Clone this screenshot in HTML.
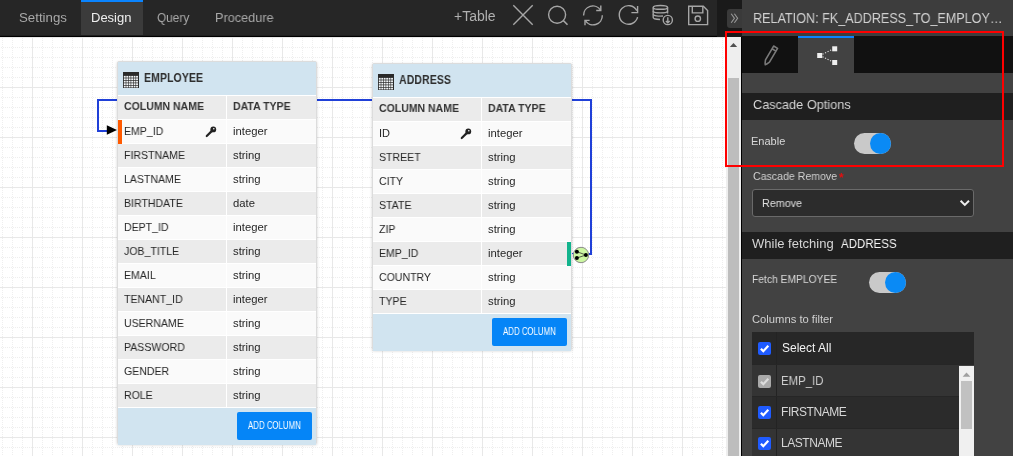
<!DOCTYPE html><html><head><meta charset="utf-8"><title>ERD</title><style>
*{margin:0;padding:0;box-sizing:border-box}
html,body{width:1013px;height:456px;overflow:hidden;background:#fff;font-family:"Liberation Sans",sans-serif}
.a{position:absolute}
.t{line-height:1;white-space:nowrap;will-change:transform}
</style></head><body>
<svg class="a" style="left:0;top:37px" width="726" height="419" shape-rendering="crispEdges">
<defs><pattern id="g" x="2" y="0" width="50" height="50" patternUnits="userSpaceOnUse">
<g stroke="#eeeeee" stroke-width="1" stroke-dasharray="1 1" stroke-dashoffset="1">
<path d="M0.5 0V50M10.5 0V50M20.5 0V50M40.5 0V50"/>
<path d="M0 0.5H50M0 10.5H50M0 20.5H50M0 30.5H50M0 40.5H50"/>
</g>
<path d="M30.5 0V50M0 0.5H50" stroke="#e8e8e8" stroke-width="1" fill="none"/>
</pattern></defs>
<rect width="726" height="419" fill="url(#g)"/>
</svg>
<svg class="a" style="left:0;top:0" width="726" height="456" shape-rendering="crispEdges">
<path d="M317 100H591V254H589" stroke="#2040d8" stroke-width="2" fill="none"/>
<path d="M117 99.5H97.5V130.5H108" stroke="#2040d8" stroke-width="2" fill="none"/>
</svg>
<div class="a" style="left:117px;top:61px;width:200px;height:383px;background:#fff;border:1px solid #dcdcdc;border-radius:2px;box-shadow:0 1px 3px rgba(0,0,0,.18)"></div>
<div class="a" style="left:118px;top:62px;width:198px;height:33px;background:#d1e4f0"></div>
<svg class="a" style="left:123px;top:72px" width="16" height="16"><rect width="16" height="16" fill="#2a2a2a"/><g fill="#f2f6f8"><rect x="0.85" y="3.90" width="1.85" height="1.75"/><rect x="3.30" y="3.90" width="1.85" height="1.75"/><rect x="5.75" y="3.90" width="1.85" height="1.75"/><rect x="8.20" y="3.90" width="1.85" height="1.75"/><rect x="10.65" y="3.90" width="1.85" height="1.75"/><rect x="13.10" y="3.90" width="1.85" height="1.75"/><rect x="0.85" y="6.35" width="1.85" height="1.75"/><rect x="3.30" y="6.35" width="1.85" height="1.75"/><rect x="5.75" y="6.35" width="1.85" height="1.75"/><rect x="8.20" y="6.35" width="1.85" height="1.75"/><rect x="10.65" y="6.35" width="1.85" height="1.75"/><rect x="13.10" y="6.35" width="1.85" height="1.75"/><rect x="0.85" y="8.80" width="1.85" height="1.75"/><rect x="3.30" y="8.80" width="1.85" height="1.75"/><rect x="5.75" y="8.80" width="1.85" height="1.75"/><rect x="8.20" y="8.80" width="1.85" height="1.75"/><rect x="10.65" y="8.80" width="1.85" height="1.75"/><rect x="13.10" y="8.80" width="1.85" height="1.75"/><rect x="0.85" y="11.25" width="1.85" height="1.75"/><rect x="3.30" y="11.25" width="1.85" height="1.75"/><rect x="5.75" y="11.25" width="1.85" height="1.75"/><rect x="8.20" y="11.25" width="1.85" height="1.75"/><rect x="10.65" y="11.25" width="1.85" height="1.75"/><rect x="13.10" y="11.25" width="1.85" height="1.75"/><rect x="0.85" y="13.70" width="1.85" height="1.75"/><rect x="3.30" y="13.70" width="1.85" height="1.75"/><rect x="5.75" y="13.70" width="1.85" height="1.75"/><rect x="8.20" y="13.70" width="1.85" height="1.75"/><rect x="10.65" y="13.70" width="1.85" height="1.75"/><rect x="13.10" y="13.70" width="1.85" height="1.75"/></g></svg>
<div class="a t" style="left:143.5px;top:71.64px;font-size:12px;color:#2e2e2e;font-weight:bold;letter-spacing:0px;transform:scaleX(0.885);transform-origin:0 0;">EMPLOYEE</div>
<div class="a" style="left:118px;top:96px;width:108px;height:23px;background:#ebebeb"></div>
<div class="a" style="left:227px;top:96px;width:89px;height:23px;background:#ebebeb"></div>
<div class="a t" style="left:124.4px;top:101.49px;font-size:11px;color:#333;font-weight:bold;letter-spacing:0px;transform:scaleX(0.955);transform-origin:0 0;">COLUMN NAME</div>
<div class="a t" style="left:233.2px;top:101.49px;font-size:11px;color:#333;font-weight:bold;letter-spacing:0px;transform:scaleX(0.955);transform-origin:0 0;">DATA TYPE</div>
<div class="a" style="left:118px;top:120px;width:108px;height:23px;background:#fafafa"></div>
<div class="a" style="left:227px;top:120px;width:89px;height:23px;background:#fafafa"></div>
<div class="a t" style="left:123.8px;top:125.99px;font-size:11px;color:#262626;font-weight:normal;letter-spacing:0px;transform:scaleX(0.96);transform-origin:0 0;">EMP_ID</div>
<div class="a t" style="left:233.3px;top:125.99px;font-size:11px;color:#262626;font-weight:normal;letter-spacing:0px;transform:scaleX(1.025);transform-origin:0 0;">integer</div>
<svg class="a" style="left:205.3px;top:125.8px" width="12" height="12"><g fill="#222"><circle cx="8.3" cy="3.4" r="2.9"/><path d="M6.2 3.9L8.0 5.6L2.5 10.8Q1.5 11.5 0.9 10.8Q0.4 10.1 1.0 9.3Z"/></g><circle cx="8.8" cy="2.8" r="0.8" fill="#fafafa"/></svg>
<div class="a" style="left:118px;top:144px;width:108px;height:23px;background:#ebebeb"></div>
<div class="a" style="left:227px;top:144px;width:89px;height:23px;background:#ebebeb"></div>
<div class="a t" style="left:123.8px;top:149.99px;font-size:11px;color:#262626;font-weight:normal;letter-spacing:0px;transform:scaleX(0.96);transform-origin:0 0;">FIRSTNAME</div>
<div class="a t" style="left:233.3px;top:149.99px;font-size:11px;color:#262626;font-weight:normal;letter-spacing:0px;transform:scaleX(1.025);transform-origin:0 0;">string</div>
<div class="a" style="left:118px;top:168px;width:108px;height:23px;background:#fafafa"></div>
<div class="a" style="left:227px;top:168px;width:89px;height:23px;background:#fafafa"></div>
<div class="a t" style="left:123.8px;top:173.99px;font-size:11px;color:#262626;font-weight:normal;letter-spacing:0px;transform:scaleX(0.96);transform-origin:0 0;">LASTNAME</div>
<div class="a t" style="left:233.3px;top:173.99px;font-size:11px;color:#262626;font-weight:normal;letter-spacing:0px;transform:scaleX(1.025);transform-origin:0 0;">string</div>
<div class="a" style="left:118px;top:192px;width:108px;height:23px;background:#ebebeb"></div>
<div class="a" style="left:227px;top:192px;width:89px;height:23px;background:#ebebeb"></div>
<div class="a t" style="left:123.8px;top:197.99px;font-size:11px;color:#262626;font-weight:normal;letter-spacing:0px;transform:scaleX(0.96);transform-origin:0 0;">BIRTHDATE</div>
<div class="a t" style="left:233.3px;top:197.99px;font-size:11px;color:#262626;font-weight:normal;letter-spacing:0px;transform:scaleX(1.025);transform-origin:0 0;">date</div>
<div class="a" style="left:118px;top:216px;width:108px;height:23px;background:#fafafa"></div>
<div class="a" style="left:227px;top:216px;width:89px;height:23px;background:#fafafa"></div>
<div class="a t" style="left:123.8px;top:221.99px;font-size:11px;color:#262626;font-weight:normal;letter-spacing:0px;transform:scaleX(0.96);transform-origin:0 0;">DEPT_ID</div>
<div class="a t" style="left:233.3px;top:221.99px;font-size:11px;color:#262626;font-weight:normal;letter-spacing:0px;transform:scaleX(1.025);transform-origin:0 0;">integer</div>
<div class="a" style="left:118px;top:240px;width:108px;height:23px;background:#ebebeb"></div>
<div class="a" style="left:227px;top:240px;width:89px;height:23px;background:#ebebeb"></div>
<div class="a t" style="left:123.8px;top:245.99px;font-size:11px;color:#262626;font-weight:normal;letter-spacing:0px;transform:scaleX(0.96);transform-origin:0 0;">JOB_TITLE</div>
<div class="a t" style="left:233.3px;top:245.99px;font-size:11px;color:#262626;font-weight:normal;letter-spacing:0px;transform:scaleX(1.025);transform-origin:0 0;">string</div>
<div class="a" style="left:118px;top:264px;width:108px;height:23px;background:#fafafa"></div>
<div class="a" style="left:227px;top:264px;width:89px;height:23px;background:#fafafa"></div>
<div class="a t" style="left:123.8px;top:269.99px;font-size:11px;color:#262626;font-weight:normal;letter-spacing:0px;transform:scaleX(0.96);transform-origin:0 0;">EMAIL</div>
<div class="a t" style="left:233.3px;top:269.99px;font-size:11px;color:#262626;font-weight:normal;letter-spacing:0px;transform:scaleX(1.025);transform-origin:0 0;">string</div>
<div class="a" style="left:118px;top:288px;width:108px;height:23px;background:#ebebeb"></div>
<div class="a" style="left:227px;top:288px;width:89px;height:23px;background:#ebebeb"></div>
<div class="a t" style="left:123.8px;top:293.99px;font-size:11px;color:#262626;font-weight:normal;letter-spacing:0px;transform:scaleX(0.96);transform-origin:0 0;">TENANT_ID</div>
<div class="a t" style="left:233.3px;top:293.99px;font-size:11px;color:#262626;font-weight:normal;letter-spacing:0px;transform:scaleX(1.025);transform-origin:0 0;">integer</div>
<div class="a" style="left:118px;top:312px;width:108px;height:23px;background:#fafafa"></div>
<div class="a" style="left:227px;top:312px;width:89px;height:23px;background:#fafafa"></div>
<div class="a t" style="left:123.8px;top:317.99px;font-size:11px;color:#262626;font-weight:normal;letter-spacing:0px;transform:scaleX(0.96);transform-origin:0 0;">USERNAME</div>
<div class="a t" style="left:233.3px;top:317.99px;font-size:11px;color:#262626;font-weight:normal;letter-spacing:0px;transform:scaleX(1.025);transform-origin:0 0;">string</div>
<div class="a" style="left:118px;top:336px;width:108px;height:23px;background:#ebebeb"></div>
<div class="a" style="left:227px;top:336px;width:89px;height:23px;background:#ebebeb"></div>
<div class="a t" style="left:123.8px;top:341.99px;font-size:11px;color:#262626;font-weight:normal;letter-spacing:0px;transform:scaleX(0.96);transform-origin:0 0;">PASSWORD</div>
<div class="a t" style="left:233.3px;top:341.99px;font-size:11px;color:#262626;font-weight:normal;letter-spacing:0px;transform:scaleX(1.025);transform-origin:0 0;">string</div>
<div class="a" style="left:118px;top:360px;width:108px;height:23px;background:#fafafa"></div>
<div class="a" style="left:227px;top:360px;width:89px;height:23px;background:#fafafa"></div>
<div class="a t" style="left:123.8px;top:365.99px;font-size:11px;color:#262626;font-weight:normal;letter-spacing:0px;transform:scaleX(0.96);transform-origin:0 0;">GENDER</div>
<div class="a t" style="left:233.3px;top:365.99px;font-size:11px;color:#262626;font-weight:normal;letter-spacing:0px;transform:scaleX(1.025);transform-origin:0 0;">string</div>
<div class="a" style="left:118px;top:384px;width:108px;height:23px;background:#ebebeb"></div>
<div class="a" style="left:227px;top:384px;width:89px;height:23px;background:#ebebeb"></div>
<div class="a t" style="left:123.8px;top:389.99px;font-size:11px;color:#262626;font-weight:normal;letter-spacing:0px;transform:scaleX(0.96);transform-origin:0 0;">ROLE</div>
<div class="a t" style="left:233.3px;top:389.99px;font-size:11px;color:#262626;font-weight:normal;letter-spacing:0px;transform:scaleX(1.025);transform-origin:0 0;">string</div>
<div class="a" style="left:118px;top:408px;width:198px;height:37px;background:#d1e4f0"></div>
<div class="a" style="left:237px;top:412px;width:75px;height:28px;background:#0585f7;border-radius:2px"></div>
<div class="a t" style="left:248.1px;top:420.94px;font-size:10px;color:#ffffff;font-weight:normal;letter-spacing:0px;transform:scaleX(0.785);transform-origin:0 0;">ADD COLUMN</div>
<div class="a" style="left:372px;top:63px;width:200px;height:287px;background:#fff;border:1px solid #dcdcdc;border-radius:2px;box-shadow:0 1px 3px rgba(0,0,0,.18)"></div>
<div class="a" style="left:373px;top:64px;width:198px;height:33px;background:#d1e4f0"></div>
<svg class="a" style="left:378px;top:74px" width="16" height="16"><rect width="16" height="16" fill="#2a2a2a"/><g fill="#f2f6f8"><rect x="0.85" y="3.90" width="1.85" height="1.75"/><rect x="3.30" y="3.90" width="1.85" height="1.75"/><rect x="5.75" y="3.90" width="1.85" height="1.75"/><rect x="8.20" y="3.90" width="1.85" height="1.75"/><rect x="10.65" y="3.90" width="1.85" height="1.75"/><rect x="13.10" y="3.90" width="1.85" height="1.75"/><rect x="0.85" y="6.35" width="1.85" height="1.75"/><rect x="3.30" y="6.35" width="1.85" height="1.75"/><rect x="5.75" y="6.35" width="1.85" height="1.75"/><rect x="8.20" y="6.35" width="1.85" height="1.75"/><rect x="10.65" y="6.35" width="1.85" height="1.75"/><rect x="13.10" y="6.35" width="1.85" height="1.75"/><rect x="0.85" y="8.80" width="1.85" height="1.75"/><rect x="3.30" y="8.80" width="1.85" height="1.75"/><rect x="5.75" y="8.80" width="1.85" height="1.75"/><rect x="8.20" y="8.80" width="1.85" height="1.75"/><rect x="10.65" y="8.80" width="1.85" height="1.75"/><rect x="13.10" y="8.80" width="1.85" height="1.75"/><rect x="0.85" y="11.25" width="1.85" height="1.75"/><rect x="3.30" y="11.25" width="1.85" height="1.75"/><rect x="5.75" y="11.25" width="1.85" height="1.75"/><rect x="8.20" y="11.25" width="1.85" height="1.75"/><rect x="10.65" y="11.25" width="1.85" height="1.75"/><rect x="13.10" y="11.25" width="1.85" height="1.75"/><rect x="0.85" y="13.70" width="1.85" height="1.75"/><rect x="3.30" y="13.70" width="1.85" height="1.75"/><rect x="5.75" y="13.70" width="1.85" height="1.75"/><rect x="8.20" y="13.70" width="1.85" height="1.75"/><rect x="10.65" y="13.70" width="1.85" height="1.75"/><rect x="13.10" y="13.70" width="1.85" height="1.75"/></g></svg>
<div class="a t" style="left:398.5px;top:73.64px;font-size:12px;color:#2e2e2e;font-weight:bold;letter-spacing:0px;transform:scaleX(0.885);transform-origin:0 0;">ADDRESS</div>
<div class="a" style="left:373px;top:98px;width:108px;height:23px;background:#ebebeb"></div>
<div class="a" style="left:482px;top:98px;width:89px;height:23px;background:#ebebeb"></div>
<div class="a t" style="left:379.4px;top:103.49px;font-size:11px;color:#333;font-weight:bold;letter-spacing:0px;transform:scaleX(0.955);transform-origin:0 0;">COLUMN NAME</div>
<div class="a t" style="left:488.2px;top:103.49px;font-size:11px;color:#333;font-weight:bold;letter-spacing:0px;transform:scaleX(0.955);transform-origin:0 0;">DATA TYPE</div>
<div class="a" style="left:373px;top:122px;width:108px;height:23px;background:#fafafa"></div>
<div class="a" style="left:482px;top:122px;width:89px;height:23px;background:#fafafa"></div>
<div class="a t" style="left:378.8px;top:127.99px;font-size:11px;color:#262626;font-weight:normal;letter-spacing:0px;transform:scaleX(0.96);transform-origin:0 0;">ID</div>
<div class="a t" style="left:488.3px;top:127.99px;font-size:11px;color:#262626;font-weight:normal;letter-spacing:0px;transform:scaleX(1.025);transform-origin:0 0;">integer</div>
<svg class="a" style="left:460.3px;top:127.8px" width="12" height="12"><g fill="#222"><circle cx="8.3" cy="3.4" r="2.9"/><path d="M6.2 3.9L8.0 5.6L2.5 10.8Q1.5 11.5 0.9 10.8Q0.4 10.1 1.0 9.3Z"/></g><circle cx="8.8" cy="2.8" r="0.8" fill="#fafafa"/></svg>
<div class="a" style="left:373px;top:146px;width:108px;height:23px;background:#ebebeb"></div>
<div class="a" style="left:482px;top:146px;width:89px;height:23px;background:#ebebeb"></div>
<div class="a t" style="left:378.8px;top:151.99px;font-size:11px;color:#262626;font-weight:normal;letter-spacing:0px;transform:scaleX(0.96);transform-origin:0 0;">STREET</div>
<div class="a t" style="left:488.3px;top:151.99px;font-size:11px;color:#262626;font-weight:normal;letter-spacing:0px;transform:scaleX(1.025);transform-origin:0 0;">string</div>
<div class="a" style="left:373px;top:170px;width:108px;height:23px;background:#fafafa"></div>
<div class="a" style="left:482px;top:170px;width:89px;height:23px;background:#fafafa"></div>
<div class="a t" style="left:378.8px;top:175.99px;font-size:11px;color:#262626;font-weight:normal;letter-spacing:0px;transform:scaleX(0.96);transform-origin:0 0;">CITY</div>
<div class="a t" style="left:488.3px;top:175.99px;font-size:11px;color:#262626;font-weight:normal;letter-spacing:0px;transform:scaleX(1.025);transform-origin:0 0;">string</div>
<div class="a" style="left:373px;top:194px;width:108px;height:23px;background:#ebebeb"></div>
<div class="a" style="left:482px;top:194px;width:89px;height:23px;background:#ebebeb"></div>
<div class="a t" style="left:378.8px;top:199.99px;font-size:11px;color:#262626;font-weight:normal;letter-spacing:0px;transform:scaleX(0.96);transform-origin:0 0;">STATE</div>
<div class="a t" style="left:488.3px;top:199.99px;font-size:11px;color:#262626;font-weight:normal;letter-spacing:0px;transform:scaleX(1.025);transform-origin:0 0;">string</div>
<div class="a" style="left:373px;top:218px;width:108px;height:23px;background:#fafafa"></div>
<div class="a" style="left:482px;top:218px;width:89px;height:23px;background:#fafafa"></div>
<div class="a t" style="left:378.8px;top:223.99px;font-size:11px;color:#262626;font-weight:normal;letter-spacing:0px;transform:scaleX(0.96);transform-origin:0 0;">ZIP</div>
<div class="a t" style="left:488.3px;top:223.99px;font-size:11px;color:#262626;font-weight:normal;letter-spacing:0px;transform:scaleX(1.025);transform-origin:0 0;">string</div>
<div class="a" style="left:373px;top:242px;width:108px;height:23px;background:#ebebeb"></div>
<div class="a" style="left:482px;top:242px;width:89px;height:23px;background:#ebebeb"></div>
<div class="a t" style="left:378.8px;top:247.99px;font-size:11px;color:#262626;font-weight:normal;letter-spacing:0px;transform:scaleX(0.96);transform-origin:0 0;">EMP_ID</div>
<div class="a t" style="left:488.3px;top:247.99px;font-size:11px;color:#262626;font-weight:normal;letter-spacing:0px;transform:scaleX(1.025);transform-origin:0 0;">integer</div>
<div class="a" style="left:373px;top:266px;width:108px;height:23px;background:#fafafa"></div>
<div class="a" style="left:482px;top:266px;width:89px;height:23px;background:#fafafa"></div>
<div class="a t" style="left:378.8px;top:271.99px;font-size:11px;color:#262626;font-weight:normal;letter-spacing:0px;transform:scaleX(0.96);transform-origin:0 0;">COUNTRY</div>
<div class="a t" style="left:488.3px;top:271.99px;font-size:11px;color:#262626;font-weight:normal;letter-spacing:0px;transform:scaleX(1.025);transform-origin:0 0;">string</div>
<div class="a" style="left:373px;top:290px;width:108px;height:23px;background:#ebebeb"></div>
<div class="a" style="left:482px;top:290px;width:89px;height:23px;background:#ebebeb"></div>
<div class="a t" style="left:378.8px;top:295.99px;font-size:11px;color:#262626;font-weight:normal;letter-spacing:0px;transform:scaleX(0.96);transform-origin:0 0;">TYPE</div>
<div class="a t" style="left:488.3px;top:295.99px;font-size:11px;color:#262626;font-weight:normal;letter-spacing:0px;transform:scaleX(1.025);transform-origin:0 0;">string</div>
<div class="a" style="left:373px;top:314px;width:198px;height:37px;background:#d1e4f0"></div>
<div class="a" style="left:492px;top:318px;width:75px;height:28px;background:#0585f7;border-radius:2px"></div>
<div class="a t" style="left:503.1px;top:326.94px;font-size:10px;color:#ffffff;font-weight:normal;letter-spacing:0px;transform:scaleX(0.785);transform-origin:0 0;">ADD COLUMN</div>
<div class="a" style="left:118px;top:120px;width:4px;height:24px;background:#ff5a00"></div>
<div class="a" style="left:567px;top:242px;width:4px;height:24px;background:#12b38c"></div>
<svg class="a" style="left:100px;top:120px" width="20" height="20"><path d="M6.8 5.3L17 10L6.8 14.7Z" fill="#000"/></svg>
<svg class="a" style="left:570px;top:244px" width="24" height="22">
<path d="M2 9.5H4" stroke="#2040d8" stroke-width="1.2"/>
<circle cx="11" cy="11" r="7.7" fill="#ccf7a2" stroke="#8a8a8a" stroke-width="1"/>
<path d="M6.9 7.7L15.9 11L6.9 14" stroke="#333" stroke-width="0.8" fill="none"/>
<g fill="#000"><circle cx="6.9" cy="7.7" r="2"/><circle cx="6.9" cy="14" r="2"/><circle cx="15.9" cy="11" r="2"/></g>
</svg>
<div class="a" style="left:0;top:0;width:717px;height:36px;background:#262626"></div>
<div class="a" style="left:0;top:35px;width:717px;height:1px;background:#1f1f1f"></div>
<div class="a" style="left:0;top:36px;width:717px;height:1px;background:#000"></div>
<div class="a" style="left:81px;top:0;width:62px;height:35px;background:#3b3b3b"></div>
<div class="a" style="left:81px;top:0;width:62px;height:2px;background:#0a84ff"></div>
<div class="a t" style="left:19.2px;top:10.80px;font-size:13px;color:#a8a8a8;font-weight:normal;letter-spacing:0px;transform:scaleX(1.02);transform-origin:0 0;">Settings</div>
<div class="a t" style="left:91.4px;top:10.80px;font-size:13px;color:#eeeeee;font-weight:normal;letter-spacing:0px;transform:scaleX(0.99);transform-origin:0 0;">Design</div>
<div class="a t" style="left:157px;top:10.80px;font-size:13px;color:#a8a8a8;font-weight:normal;letter-spacing:0px;transform:scaleX(0.91);transform-origin:0 0;">Query</div>
<div class="a t" style="left:215px;top:10.80px;font-size:13px;color:#a8a8a8;font-weight:normal;letter-spacing:0px;transform:scaleX(0.975);transform-origin:0 0;">Procedure</div>
<div class="a t" style="left:453.5px;top:9.05px;font-size:14px;color:#b0b0b0;font-weight:normal;letter-spacing:0px;">+Table</div>
<svg class="a" style="left:500px;top:0" width="217" height="35" fill="none" stroke="#a6a6a6" stroke-width="1.4">
<path d="M13.3 5.3L32.7 24.7M32.7 5.3L13.3 24.7"/>
<circle cx="57.1" cy="14.7" r="8.5"/>
<path d="M63.4 20.6L67.5 24.7" stroke-width="1.5"/>
<path d="M83.6 15.5A9.2 9.2 0 0 1 100.6 10.3"/><path d="M96.2 10.5H100.8V5.6"/>
<path d="M102.3 15.3A9.2 9.2 0 0 1 85.2 20.4"/><path d="M89.6 20.4H85V25.3"/>
<path d="M137.6 17.2A9.3 9.3 0 1 1 136.8 10.6"/><path d="M131.4 12.6H137.6V6"/>
<ellipse cx="160.4" cy="7.4" rx="7.2" ry="1.9"/>
<path d="M153.2 7.4V17.6Q153.2 19.4 160 19.5M167.6 7.4V13.5"/>
<path d="M153.2 11A7.2 1.9 0 0 0 167.6 11M153.2 14.3A7.2 1.9 0 0 0 163 16"/>
<circle cx="167.8" cy="20" r="4.6"/>
<path d="M167.8 17.3V22.7M165.9 20.9L167.8 22.8L169.7 20.9"/>
<path d="M188.7 6.3H203.3L207.6 10.6V24.6H188.7Z"/>
<path d="M192.3 6.3V12.9H202.8V6.3"/>
<circle cx="197.8" cy="18.7" r="2.7"/>
</svg>
<div class="a" style="left:717px;top:0;width:25px;height:37px;background:#1a1a1a"></div>
<div class="a" style="left:727px;top:9px;width:15px;height:19px;background:#3a3a3a;border-radius:3px 0 0 3px"></div>
<svg class="a" style="left:727px;top:9px" width="15" height="19" fill="none" stroke="#9a9a9a" stroke-width="1.1"><path d="M4.2 4.8L7.4 9.3L4.2 13.8M7.4 4.8L10.6 9.3L7.4 13.8"/></svg>
<div class="a" style="left:742px;top:0;width:271px;height:37px;background:#3d3d3d"></div>
<div class="a t" style="left:753.3px;top:9.80px;font-size:15px;color:#d0d0d0;font-weight:normal;letter-spacing:0px;transform:scaleX(0.84);transform-origin:0 0;">RELATION: FK_ADDRESS_TO_EMPLOY…</div>
<div class="a" style="left:726px;top:37px;width:15px;height:419px;background:#eeeeee"></div>
<div class="a" style="left:741px;top:37px;width:1px;height:419px;background:#000"></div>
<div class="a" style="left:728px;top:78px;width:11px;height:378px;background:#bdbdbd"></div>
<svg class="a" style="left:726px;top:37px" width="15" height="14"><path d="M3.8 10.1L7.5 5.9L11.2 10.1Z" fill="#505050"/></svg>
<div class="a" style="left:742px;top:37px;width:271px;height:419px;background:#424242"></div>
<div class="a" style="left:742px;top:36px;width:271px;height:37px;background:#111111"></div>
<div class="a" style="left:798px;top:36px;width:56px;height:37px;background:#424242"></div>
<div class="a" style="left:798px;top:36px;width:56px;height:2px;background:#0a84ff"></div>
<svg class="a" style="left:742px;top:37px" width="56" height="36" fill="none" stroke="#7a7a7a" stroke-width="1.6" stroke-linejoin="round">
<g transform="translate(33.6 10.2) rotate(30.5)"><path d="M-2.3 0H2.3V16Q1.2 19 0 20.3Q-1.2 19 -2.3 16Z"/><path d="M-2.3 3.2H2.3"/></g>
</svg>
<svg class="a" style="left:798px;top:37px" width="56" height="36">
<g fill="#efefef"><rect x="19.2" y="16" width="5" height="5"/><rect x="34.2" y="9.3" width="5" height="5"/><rect x="34.2" y="23" width="5" height="5"/></g>
<g stroke="#dddddd" stroke-width="1.2" stroke-dasharray="1.2 1.6" fill="none"><path d="M24.5 17.2L34 12.6M24.5 19.8L34 24.5"/></g>
</svg>
<div class="a" style="left:742px;top:93px;width:271px;height:27px;background:#1f1f1f"></div>
<div class="a t" style="left:752.5px;top:98.20px;font-size:13px;color:#d6d6d6;font-weight:normal;letter-spacing:0px;transform:scaleX(0.98);transform-origin:0 0;">Cascade Options</div>
<div class="a t" style="left:751.2px;top:135.69px;font-size:11px;color:#d8d8d8;font-weight:normal;letter-spacing:0px;transform:scaleX(0.99);transform-origin:0 0;">Enable</div>
<div class="a" style="left:854px;top:133px;width:37px;height:21px;border-radius:11px;background:#c9c9c9"></div><div class="a" style="left:870px;top:133px;width:21px;height:21px;border-radius:50%;background:#0a8af5"></div>
<div class="a t" style="left:752.5px;top:171.09px;font-size:11px;color:#d0d0d0;font-weight:normal;letter-spacing:0px;transform:scaleX(0.962);transform-origin:0 0;">Cascade Remove</div>
<div class="a t" style="left:839.2px;top:172.14px;font-size:12px;color:#e01010;font-weight:bold;letter-spacing:0px;">*</div>
<div class="a" style="left:752px;top:189px;width:222px;height:28px;background:#2c2c2c;border:1px solid #6a6a6a;border-radius:3px"></div>
<div class="a t" style="left:762.1px;top:197.89px;font-size:11px;color:#e0e0e0;font-weight:normal;letter-spacing:0px;transform:scaleX(0.98);transform-origin:0 0;">Remove</div>
<svg class="a" style="left:955px;top:195px" width="20" height="16" fill="none" stroke="#eeeeee" stroke-width="2"><path d="M5.6 5.7L9.8 9.9L14 5.7"/></svg>
<div class="a" style="left:742px;top:232px;width:271px;height:27px;background:#1f1f1f"></div>
<div class="a t" style="left:752.2px;top:237.40px;font-size:13px;color:#d6d6d6;font-weight:normal;letter-spacing:0px;">While fetching</div>
<div class="a t" style="left:840.8px;top:237.40px;font-size:13px;color:#f4f4f4;font-weight:normal;letter-spacing:0px;transform:scaleX(0.884);transform-origin:0 0;">ADDRESS</div>
<div class="a t" style="left:751.5px;top:274.09px;font-size:11px;color:#d8d8d8;font-weight:normal;letter-spacing:0px;transform:scaleX(0.935);transform-origin:0 0;">Fetch EMPLOYEE</div>
<div class="a" style="left:869px;top:272px;width:37px;height:21px;border-radius:11px;background:#c9c9c9"></div><div class="a" style="left:885px;top:272px;width:21px;height:21px;border-radius:50%;background:#0a8af5"></div>
<div class="a t" style="left:752.2px;top:313.69px;font-size:11px;color:#d0d0d0;font-weight:normal;letter-spacing:0px;transform:scaleX(1.02);transform-origin:0 0;">Columns to filter</div>
<div class="a" style="left:752px;top:332px;width:222px;height:33px;background:#272727"></div>
<div class="a" style="left:752px;top:365px;width:207px;height:91px;background:#303030"></div>
<div class="a" style="left:752px;top:365px;width:207px;height:32px;background:#343434"></div>
<div class="a" style="left:752px;top:397px;width:207px;height:32px;background:#2b2b2b"></div>
<div class="a" style="left:752px;top:429px;width:207px;height:32px;background:#343434"></div>
<div class="a" style="left:776px;top:332px;width:1px;height:124px;background:#232323"></div>
<div class="a" style="left:752px;top:364px;width:207px;height:1px;background:#262626"></div>
<div class="a" style="left:752px;top:396px;width:207px;height:1px;background:#262626"></div>
<div class="a" style="left:752px;top:428px;width:207px;height:1px;background:#262626"></div>
<div class="a" style="left:959px;top:366px;width:15px;height:90px;background:#f0f0f0"></div>
<div class="a" style="left:961px;top:381px;width:11px;height:48px;background:#c1c1c1"></div>
<svg class="a" style="left:959px;top:365.5px" width="15" height="14"><path d="M3.6 10.8L7.5 6.6L11.4 10.8Z" fill="#a0a0a0"/></svg>
<svg class="a" style="left:758px;top:342px" width="13" height="13"><rect width="13" height="13" rx="2" fill="#1f5bff"/><path d="M2.9 6.7L5.3 9.2L10.3 3.7" fill="none" stroke="#ffffff" stroke-width="2.2"/></svg>
<div class="a t" style="left:781.7px;top:342.04px;font-size:12px;color:#f2f2f2;font-weight:normal;letter-spacing:0px;">Select All</div>
<svg class="a" style="left:758px;top:375px" width="13" height="13"><rect width="13" height="13" rx="2" fill="#a9a9a9"/><path d="M2.9 6.7L5.3 9.2L10.3 3.7" fill="none" stroke="#dcdcdc" stroke-width="2.2"/></svg>
<div class="a t" style="left:780.9px;top:374.64px;font-size:12px;color:#cfcfcf;font-weight:normal;letter-spacing:0px;transform:scaleX(0.95);transform-origin:0 0;">EMP_ID</div>
<svg class="a" style="left:758px;top:406px" width="13" height="13"><rect width="13" height="13" rx="2" fill="#1f5bff"/><path d="M2.9 6.7L5.3 9.2L10.3 3.7" fill="none" stroke="#ffffff" stroke-width="2.2"/></svg>
<div class="a t" style="left:780.6px;top:406.14px;font-size:12px;color:#d6d6d6;font-weight:normal;letter-spacing:-0.45px;">FIRSTNAME</div>
<svg class="a" style="left:758px;top:437px" width="13" height="13"><rect width="13" height="13" rx="2" fill="#1f5bff"/><path d="M2.9 6.7L5.3 9.2L10.3 3.7" fill="none" stroke="#ffffff" stroke-width="2.2"/></svg>
<div class="a t" style="left:780.6px;top:437.04px;font-size:12px;color:#d6d6d6;font-weight:normal;letter-spacing:-0.45px;">LASTNAME</div>
<div class="a" style="left:725px;top:31px;width:279px;height:136px;border:2px solid #ff0000"></div>
</body></html>
